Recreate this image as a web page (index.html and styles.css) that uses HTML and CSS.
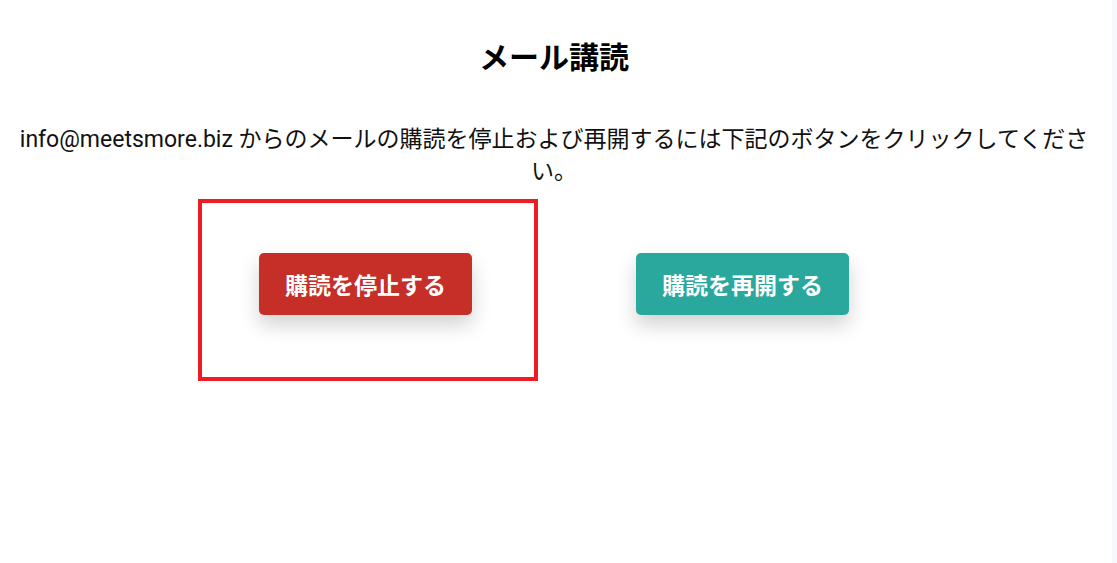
FILE: index.html
```html
<!DOCTYPE html>
<html lang="ja">
<head>
    <meta charset="UTF-8">
    <meta name="viewport" content="width=device-width, initial-scale=1.0">
    <title>メール講読</title>
    <link rel="stylesheet" href="styles.css">
</head>
<body>
    <div class="container">
        <h1>メール講読</h1>
        <p class="description">info@meetsmore.biz からのメールの購読を停止および再開するには下記のボタンをクリックしてください。</p>
        <div class="actions">
            <div class="highlight-wrap">
                <button class="btn btn-stop">購読を停止する</button>
                <span class="highlight"></span>
            </div>
            <button class="btn btn-resume">購読を再開する</button>
        </div>
    </div>
</body>
</html>
```

FILE: styles.css
```css
html {
    background: #f7f8fb;
}
body {
    margin: 0 5px 0 0;
    min-height: 563px;
    background: #fff;
    font-family: Roboto, "Noto Sans CJK JP", sans-serif;
    color: #111;
}
.container {
    padding: 38px 18px 0 14px;
    text-align: center;
}
h1 {
    margin: 0;
    font-size: 30px;
    line-height: 40px;
    font-weight: bold;
    color: #000;
}
.description {
    margin: 46px 0 0;
    font-size: 23px;
    line-height: 32px;
}
.actions {
    display: flex;
    justify-content: center;
    gap: 164px;
    margin-top: 65px;
}
.highlight-wrap {
    position: relative;
}
.highlight {
    position: absolute;
    left: -61px;
    top: -54px;
    width: 332px;
    height: 174px;
    border: 4px solid #ee1c24;
    pointer-events: none;
}
.btn {
    width: 213px;
    height: 62px;
    border: none;
    border-radius: 5px;
    color: #fff;
    font-family: Roboto, "Noto Sans CJK JP", sans-serif;
    font-size: 23px;
    font-weight: bold;
    box-shadow: 0 10px 20px rgba(0, 0, 0, 0.18);
    cursor: pointer;
}
.btn-stop {
    background-color: #c62e28;
}
.btn-resume {
    background-color: #2aa89d;
}
```
